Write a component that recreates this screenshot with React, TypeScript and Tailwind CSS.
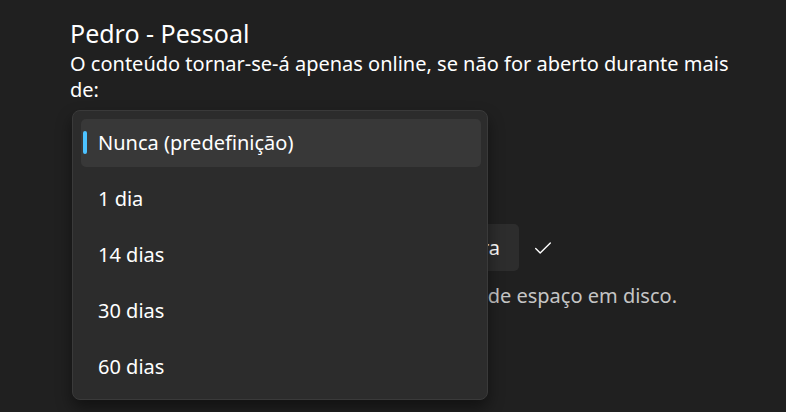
const options = ["Nunca (predefinição)", "1 dia", "14 dias", "30 dias", "60 dias"] as const

function CheckIcon() {
  return (
    <svg width="18" height="18" viewBox="0 0 16 16" fill="none" stroke="currentColor" strokeWidth="1.2" aria-hidden>
      <path d="M1.5 8.5 L5.5 12.5 L14.5 3.5" strokeLinecap="round" strokeLinejoin="round" />
    </svg>
  )
}

function Flyout() {
  return (
    <div className="absolute left-[72px] top-[110px] flex w-[416px] flex-col gap-2 rounded-[8px] border border-[#3a3a3a] bg-[#2c2c2c] py-2 pl-2 pr-[6px] shadow-[0_8px_16px_rgba(0,0,0,0.45)]">
      {options.map((label, i) => (
        <div
          key={label}
          className={`relative flex h-12 items-center rounded-[5px] pl-[17px] text-[20px] text-white ${i === 0 ? "bg-[#383838]" : ""}`}
        >
          {i === 0 && <span className="absolute left-[2px] top-[12px] h-[23px] w-[4px] rounded-full bg-[#4cc2ff]" />}
          {label}
        </div>
      ))}
    </div>
  )
}

export default function App() {
  return (
    <div className="relative h-[412px] w-[786px] overflow-hidden bg-[#202020] font-['Noto_Sans','Open_Sans',sans-serif] text-white">
      <div className="flex flex-col pl-[70px] pt-[15px]">
        <h1 className="text-[25px] leading-[36px]">Pedro - Pessoal</h1>
        <p className="w-[680px] text-[20px] leading-[26px]">
          O conteúdo tornar-se-á apenas online, se não for aberto durante mais de:
        </p>
        <div className="mt-[121px] flex items-center gap-[15px]">
          <button className="ml-[230px] flex h-[47px] w-[219px] items-center justify-end rounded-[5px] bg-[#2d2d2d] px-[19px] text-[20px] text-white">
            Libertar agora
          </button>
          <span className="text-white">
            <CheckIcon />
          </span>
        </div>
        <p className="mt-[12px] w-[607px] text-right text-[20px] leading-[26px] text-[#c5c5c5]">
          Os ficheiros ficam locais e ocupam de espaço em disco.
        </p>
      </div>
      <Flyout />
    </div>
  )
}
